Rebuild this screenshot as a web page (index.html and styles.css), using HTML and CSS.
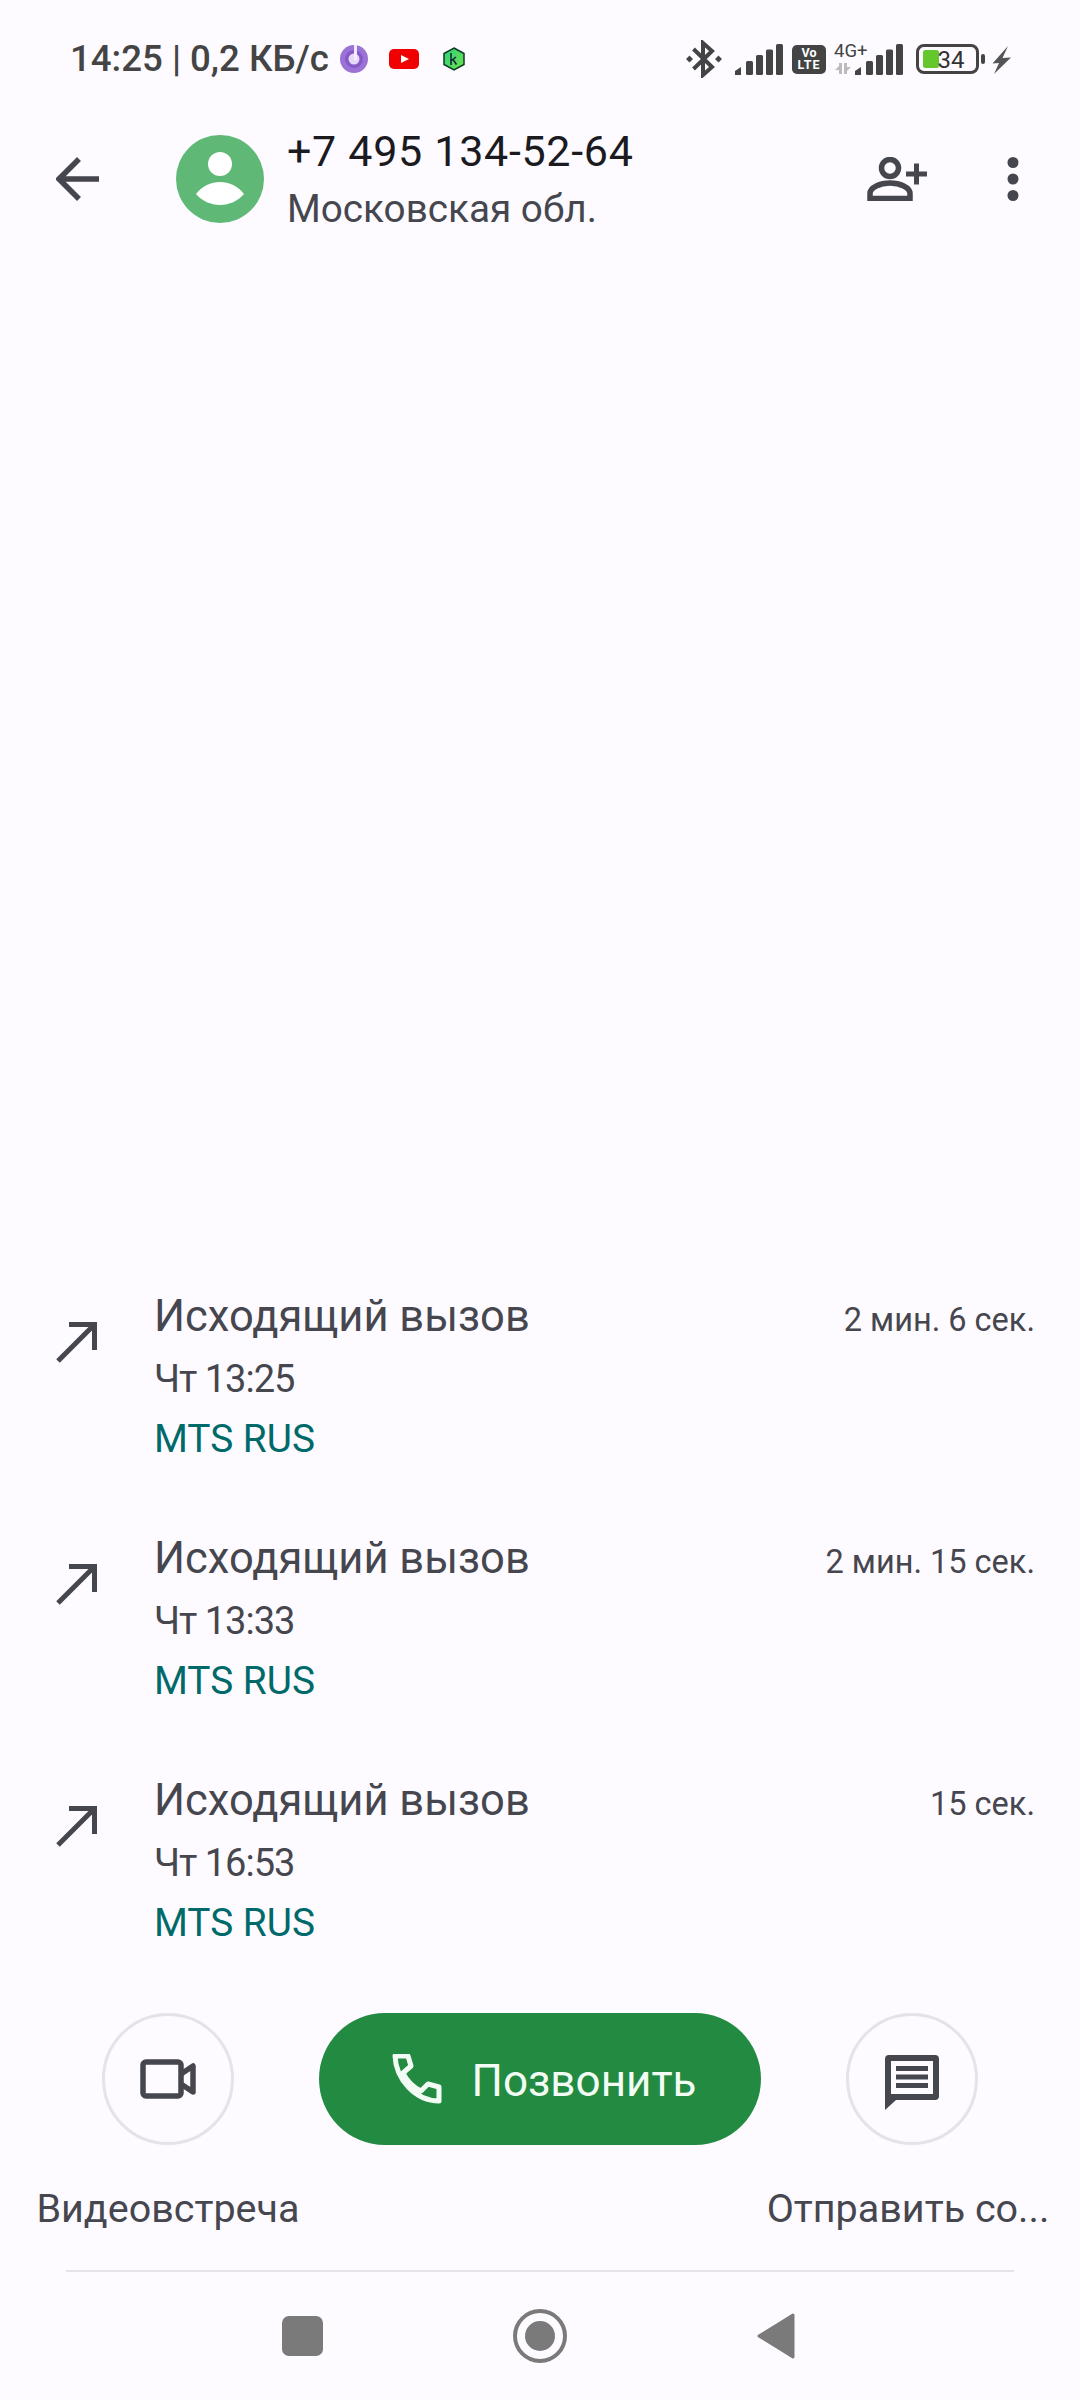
FILE: index.html
```html
<!DOCTYPE html>
<html lang="ru">
<head>
<meta charset="utf-8">
<title>Вызовы</title>
<link rel="stylesheet" href="styles.css">
</head>
<body>
<div class="screen">
  <div class="status">
    <div class="status-left">
      <span class="clock">14:25 | 0,2 КБ/с</span>
      <svg class="i-music" viewBox="0 0 28 28"><circle cx="14" cy="14" r="14" fill="#9b72d6"/><circle cx="14" cy="14" r="9" fill="#8659c9"/><circle cx="14" cy="14" r="5.500" fill="#e6d9f8"/><rect x="14" y="0" width="3" height="15" fill="#f3ecfc"/></svg>
      <svg class="i-yt" viewBox="0 0 30 20"><rect width="30" height="20" rx="5" fill="#f00000"/><path d="M12 6l8 4-8 4z" fill="#fff"/></svg>
      <svg class="i-k" viewBox="0 0 22 24"><defs><linearGradient id="kg" x1="0" y1="0" x2="1" y2="1"><stop offset="0" stop-color="#2fd37a"/><stop offset="1" stop-color="#6fe04f"/></linearGradient></defs><path d="M11 1l10 5.500v11L11 23 1 17.500v-11z" fill="url(#kg)" stroke="#0c3b24" stroke-width="1.500"/><path d="M8 6v12M8 14l5-4M10 12.500l3.500 5" fill="none" stroke="#123" stroke-width="1.500"/></svg>
    </div>
    <div class="status-right">
      <svg class="i-bt" viewBox="0 0 36 38"><path d="M7.500 9L26 27l-9 8V3l9 8L7.500 29" fill="none" stroke="#444" stroke-width="4"/><path d="M3.500 15.500L7 19l-3.500 3.500L0 19zM32.500 15.500L36 19l-3.500 3.500L29 19z" fill="#444"/></svg>
      <svg class="i-sig" viewBox="0 0 48 31"><g fill="#444"><path d="M0 31v-4l6-4v8z"/><rect x="11" y="17" width="7" height="14" rx="1.500"/><rect x="21" y="11" width="7" height="20" rx="1.500"/><rect x="31" y="5.500" width="7" height="25.500" rx="1.500"/><rect x="41" y="0" width="7" height="31" rx="1.500"/></g></svg>
      <span class="volte"><span>Vo</span><span class="lte">LTE</span></span>
      <span class="net">
        <span class="net-label">4G+</span>
        <svg class="i-arrows" viewBox="0 0 18 11"><path d="M1 7l4-4V0h3v11H5V7zM17 4l-4 4v3h-3V0h3v4z" fill="#bbb"/></svg>
      </span>
      <svg class="i-sig2" viewBox="0 0 48 31"><g fill="#444"><path d="M0 31v-4l6-4v8z"/><rect x="11" y="17" width="7" height="14" rx="1.500"/><rect x="21" y="11" width="7" height="20" rx="1.500"/><rect x="31" y="5.500" width="7" height="25.500" rx="1.500"/><rect x="41" y="0" width="7" height="31" rx="1.500"/></g></svg>
      <svg class="i-bat" viewBox="0 0 70 30"><rect x="1.500" y="1.500" width="60" height="27" rx="6.500" fill="none" stroke="#444" stroke-width="3"/><rect x="7" y="6" width="16" height="18" rx="2.500" fill="#64c72d"/><text x="35" y="24" class="bat-num" text-anchor="middle">34</text><rect x="65" y="10" width="4" height="10" rx="2" fill="#444"/></svg>
      <svg class="i-bolt" viewBox="0 0 19 29"><path d="M16 1L.5 18.500 7 18 2 29l17-16.500-8.500.5z" fill="#555"/></svg>
    </div>
  </div>

  <div class="header">
    <svg class="i-back" viewBox="0 0 43 44"><path d="M43 22H4M23 2L3 22l20 20" fill="none" stroke="#46464f" stroke-width="5.500"/></svg>
    <svg class="avatar" viewBox="0 0 88 88"><circle cx="44" cy="44" r="44" fill="#60b877"/><circle cx="44" cy="29" r="12" fill="#fff"/><path d="M20 59c6-8 15-12 24-12s18 4 24 12c-6 7-15 11-24 11s-18-4-24-11z" fill="#fff"/></svg>
    <div class="who">
      <div class="name">+7 495 134-52-64</div>
      <div class="region">Московская обл.</div>
    </div>
    <div class="header-actions">
      <svg class="i-add" viewBox="0 0 60 44"><circle cx="23" cy="11" r="8.500" fill="none" stroke="#46464f" stroke-width="5.500"/><path d="M3 41.500v-5c0-6 10-10.500 20-10.500s20 4.500 20 10.500v5z" fill="none" stroke="#46464f" stroke-width="5.500"/><path d="M39 17h21M49.500 6.500v21" fill="none" stroke="#46464f" stroke-width="5"/></svg>
      <svg class="i-more" viewBox="0 0 12 44"><g fill="#46464f"><circle cx="6" cy="5.500" r="5.500"/><circle cx="6" cy="22" r="5.500"/><circle cx="6" cy="38.500" r="5.500"/></g></svg>
    </div>
  </div>

  <div class="spacer"></div>

  <div class="calls">
    <div class="call">
      <svg class="i-out" viewBox="0 0 41 41"><path d="M13 2.500h25.500V28M38.500 2.500L2 39" fill="none" stroke="#46464f" stroke-width="5"/></svg>
      <div class="call-text">
        <div class="call-title">Исходящий вызов</div>
        <div class="call-time">Чт 13:25</div>
        <div class="call-sim">MTS RUS</div>
      </div>
      <div class="call-dur">2 мин. 6 сек.</div>
    </div>
    <div class="call">
      <svg class="i-out" viewBox="0 0 41 41"><path d="M13 2.500h25.500V28M38.500 2.500L2 39" fill="none" stroke="#46464f" stroke-width="5"/></svg>
      <div class="call-text">
        <div class="call-title">Исходящий вызов</div>
        <div class="call-time">Чт 13:33</div>
        <div class="call-sim">MTS RUS</div>
      </div>
      <div class="call-dur">2 мин. 15 сек.</div>
    </div>
    <div class="call">
      <svg class="i-out" viewBox="0 0 41 41"><path d="M13 2.500h25.500V28M38.500 2.500L2 39" fill="none" stroke="#46464f" stroke-width="5"/></svg>
      <div class="call-text">
        <div class="call-title">Исходящий вызов</div>
        <div class="call-time">Чт 16:53</div>
        <div class="call-sim">MTS RUS</div>
      </div>
      <div class="call-dur">15 сек.</div>
    </div>
  </div>

  <div class="actions">
    <div class="action">
      <div class="round">
        <svg class="i-video" viewBox="0 0 56 40"><path d="M3 6a3 3 0 0 1 3-3h32a3 3 0 0 1 3 3v28a3 3 0 0 1-3 3H6a3 3 0 0 1-3-3z" fill="none" stroke="#46464f" stroke-width="5.500"/><path d="M41 15l12-8v26l-12-8" fill="none" stroke="#46464f" stroke-width="5.500" stroke-linejoin="round"/></svg>
      </div>
      <div class="action-label">Видеовстреча</div>
    </div>
    <div class="call-btn">
      <svg class="i-phone" viewBox="0 0 50 50"><path d="M3 2h13l3 10-8 7c4 8 10 14 18 18l7-7 11 3v14C24 47 4 26 3 2z" fill="none" stroke="#f2fbf4" stroke-width="5" stroke-linejoin="round"/></svg>
      <span class="call-btn-label">Позвонить</span>
    </div>
    <div class="action">
      <div class="round">
        <svg class="i-msg" viewBox="0 0 54 56"><path d="M0 5a4 4 0 0 1 4-4h46a4 4 0 0 1 4 4v37a4 4 0 0 1-4 4H11L0 56z" fill="#46464f"/><rect x="6" y="7" width="42" height="33" fill="#fdfbff"/><rect x="11" y="12" width="32" height="5" fill="#46464f"/><rect x="11" y="20.500" width="32" height="5" fill="#46464f"/><rect x="11" y="29" width="32" height="5" fill="#46464f"/></svg>
      </div>
      <div class="action-label action-label-end">Отправить со...</div>
    </div>
  </div>

  <div class="nav">
    <svg class="n-square" viewBox="0 0 41 40"><rect width="41" height="40" rx="7" fill="#7a7a7a"/></svg>
    <svg class="n-home" viewBox="0 0 54 54"><circle cx="27" cy="27" r="25" fill="none" stroke="#7a7a7a" stroke-width="4"/><circle cx="27" cy="27" r="15" fill="#7a7a7a"/></svg>
    <svg class="n-back" viewBox="0 0 38 46"><path d="M36 2L2 23l34 21z" fill="#7a7a7a" stroke="#7a7a7a" stroke-width="3" stroke-linejoin="round"/></svg>
  </div>
</div>
</body>
</html>
```

FILE: styles.css
```css
* { box-sizing: border-box; }
html, body { margin: 0; padding: 0; }
body {
  background: #fdfbff;
  font-family: Roboto, "Noto Sans", sans-serif;
  color: #46464f;
}
svg { display: block; flex: none; }

.screen {
  width: 1080px;
  height: 2400px;
  display: flex;
  flex-direction: column;
  overflow: hidden;
}

/* status bar */
.status {
  height: 118px;
  padding: 0 69px 0 70px;
  display: flex;
  align-items: center;
  justify-content: space-between;
}
.status-left, .status-right { display: flex; align-items: center; }
.clock { font-size: 36.6px; font-weight: 500; color: #444; line-height: 42px; white-space: nowrap; }
.i-music { width: 28px; height: 28px; margin-left: 11px; }
.i-yt { width: 30px; height: 20px; margin-left: 21px; }
.i-k { width: 22px; height: 24px; margin-left: 24px; }
.i-bt { width: 36px; height: 38px; }
.i-sig { width: 48px; height: 31px; margin-left: 13px; }
.volte {
  width: 34px; height: 29px; margin-left: 9px;
  background: #444; color: #fff; border-radius: 5px;
  display: flex; flex-direction: column; align-items: center; justify-content: center;
  font-size: 12.5px; font-weight: 700; line-height: 12px;
}
.lte { letter-spacing: 1px; }
.net { width: 36px; margin-left: 8px; height: 34px; display: flex; flex-direction: column; }
.net-label { font-size: 18.500px; line-height: 18px; color: #444; white-space: nowrap; }
.i-arrows { width: 18px; height: 11px; margin-top: 3px; }
.i-sig2 { width: 48px; height: 31px; margin-left: -15px; }
.i-bat { width: 70px; height: 30px; margin-left: 13px; }
.bat-num { font-size: 24px; fill: #333; font-family: Roboto, sans-serif; }
.i-bolt { width: 19px; height: 29px; margin-left: 6px; }

/* header */
.header {
  height: 122px;
  padding: 0 61px 0 56px;
  display: flex;
  align-items: center;
}
.i-back { width: 43px; height: 44px; }
.avatar { width: 88px; height: 88px; margin-left: 77px; }
.who { margin-left: 23px; }
.name { font-size: 43px; letter-spacing: 0.7px; line-height: 50px; color: #1b1b1f; white-space: nowrap; }
.region { margin-top: 10px; font-size: 38.7px; line-height: 46px; white-space: nowrap; }
.header-actions { margin-left: auto; display: flex; align-items: center; gap: 80px; }
.i-add { width: 60px; height: 44px; }
.i-more { width: 12px; height: 44px; }

.spacer { flex: 1; }

/* calls */
.call {
  height: 242px;
  padding: 17px 45px 0 56px;
  display: flex;
  align-items: flex-start;
}
.i-out { width: 41px; height: 41px; margin-top: 35px; }
.call-text { margin-left: 57px; flex: 1; }
.call-title { font-size: 43.500px; line-height: 60px; }
.call-time { margin-top: 2px; font-size: 38px; letter-spacing: -1px; line-height: 60px; }
.call-sim { font-size: 38.800px; line-height: 60px; color: #006a6a; }
.call-dur { margin-top: 3px; font-size: 32.500px; line-height: 60px; }

/* actions */
.actions {
  height: 257px;
  margin-top: 17px;
  padding-left: 18px;
  display: grid;
  grid-template-columns: 300px 442px 300px;
  column-gap: 1px;
  align-items: start;
}
.action { display: flex; flex-direction: column; align-items: center; }
.round {
  width: 132px; height: 132px;
  border: 3px solid #e4e3ea; border-radius: 50%;
  display: flex; align-items: center; justify-content: center;
}
.i-video { width: 56px; height: 40px; }
.i-msg { width: 54px; height: 56px; margin-top: 6px; }
.action-label { margin-top: 39px; font-size: 39.500px; line-height: 50px; white-space: nowrap; }
.action-label-end { margin-right: 8px; }
.call-btn {
  height: 132px;
  padding-left: 8px;
  background: #228b41;
  border-radius: 66px;
  display: flex; align-items: center; justify-content: center;
  gap: 30px;
  color: #f2fbf4;
}
.i-phone { width: 50px; height: 50px; }
.call-btn-label { font-size: 44px; line-height: 56px; padding-top: 4px; }

/* navigation */
.nav {
  height: 130px;
  margin: 0 66px;
  border-top: 2px solid #e4e3ea;
  display: flex;
  align-items: center;
  padding-left: 216px;
}
.n-square { width: 41px; height: 40px; }
.n-home { width: 54px; height: 54px; margin-left: 190px; }
.n-back { width: 38px; height: 46px; margin-left: 190px; }
```
